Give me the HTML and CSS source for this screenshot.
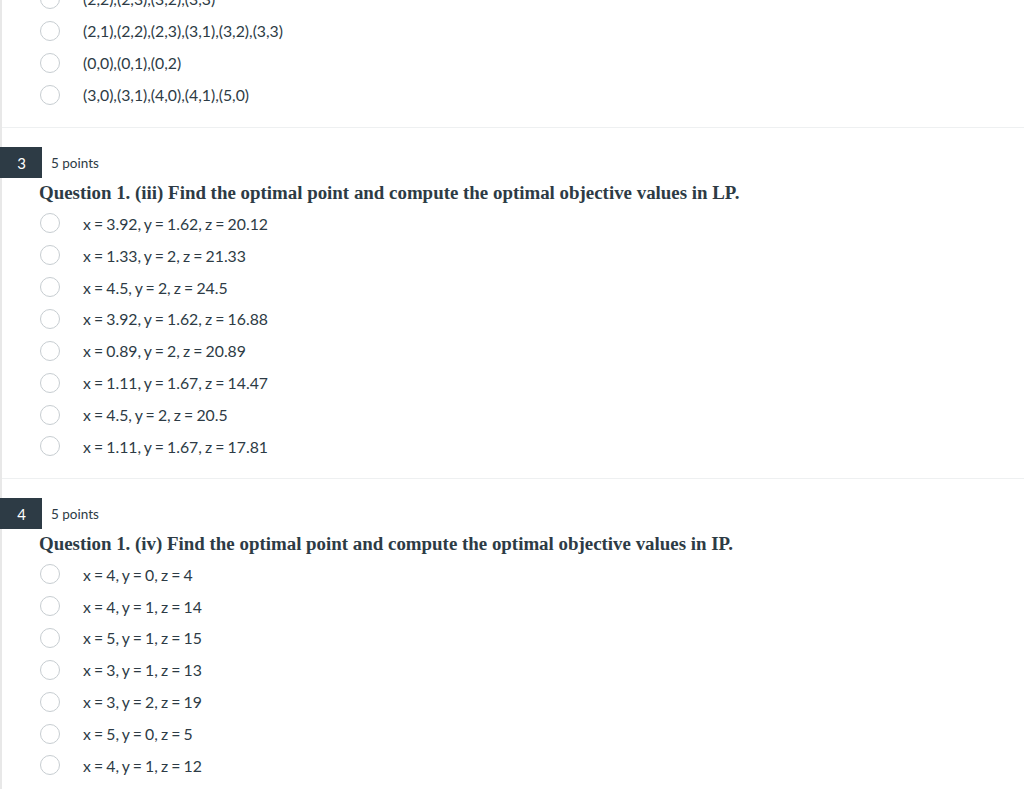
FILE: index.html
```html
<!DOCTYPE html>
<html>
<head>
<meta charset="utf-8">
<link rel="stylesheet" href="styles.css">
</head>
<body>
<div class="page">
  <section class="question first">
    <ul class="answers">
      <li><span class="radio"></span><span class="label">(2,2),(2,3),(3,2),(3,3)</span></li>
      <li><span class="radio"></span><span class="label">(2,1),(2,2),(2,3),(3,1),(3,2),(3,3)</span></li>
      <li><span class="radio"></span><span class="label">(0,0),(0,1),(0,2)</span></li>
      <li><span class="radio"></span><span class="label">(3,0),(3,1),(4,0),(4,1),(5,0)</span></li>
    </ul>
  </section>
  <section class="question">
    <div class="qhead"><span class="badge">3</span><span class="points">5 points</span></div>
    <div class="qtext">Question 1. (iii) Find the optimal point and compute the optimal objective values in LP.</div>
    <ul class="answers">
      <li><span class="radio"></span><span class="label">x = 3.92, y = 1.62, z = 20.12</span></li>
      <li><span class="radio"></span><span class="label">x = 1.33, y = 2, z = 21.33</span></li>
      <li><span class="radio"></span><span class="label">x = 4.5, y = 2, z = 24.5</span></li>
      <li><span class="radio"></span><span class="label">x = 3.92, y = 1.62, z = 16.88</span></li>
      <li><span class="radio"></span><span class="label">x = 0.89, y = 2, z = 20.89</span></li>
      <li><span class="radio"></span><span class="label">x = 1.11, y = 1.67, z = 14.47</span></li>
      <li><span class="radio"></span><span class="label">x = 4.5, y = 2, z = 20.5</span></li>
      <li><span class="radio"></span><span class="label">x = 1.11, y = 1.67, z = 17.81</span></li>
    </ul>
  </section>
  <section class="question">
    <div class="qhead"><span class="badge">4</span><span class="points">5 points</span></div>
    <div class="qtext">Question 1. (iv) Find the optimal point and compute the optimal objective values in IP.</div>
    <ul class="answers">
      <li><span class="radio"></span><span class="label">x = 4, y = 0, z = 4</span></li>
      <li><span class="radio"></span><span class="label">x = 4, y = 1, z = 14</span></li>
      <li><span class="radio"></span><span class="label">x = 5, y = 1, z = 15</span></li>
      <li><span class="radio"></span><span class="label">x = 3, y = 1, z = 13</span></li>
      <li><span class="radio"></span><span class="label">x = 3, y = 2, z = 19</span></li>
      <li><span class="radio"></span><span class="label">x = 5, y = 0, z = 5</span></li>
      <li><span class="radio"></span><span class="label">x = 4, y = 1, z = 12</span></li>
    </ul>
  </section>
</div>
</body>
</html>
```
FILE: styles.css
```css
html, body {
  margin: 0;
  padding: 0;
  background: #ffffff;
}
body {
  overflow: hidden;
  height: 789px;
}
.page {
  border-left: 2px solid #e8e8e8;
  min-height: 900px;
  font-family: Lato, "Liberation Sans", sans-serif;
  color: #2d3b45;
}
.question {
  padding: 19px 0 16px 0;
  border-bottom: 1px solid #eef0f1;
}
.question.first {
  padding-top: 0;
  padding-bottom: 17px;
  margin-top: -17px;
}
.qhead {
  display: flex;
  align-items: center;
  height: 31px;
  margin-left: -2px;
}
.badge {
  display: flex;
  align-items: center;
  justify-content: center;
  width: 42px;
  height: 31px;
  background: #2d3b45;
  color: #ffffff;
  font-size: 15px;
  box-sizing: border-box;
  padding-left: 1px;
}
.points {
  margin-left: 9px;
  font-size: 13.5px;
}
.qtext {
  height: 29px;
  display: flex;
  align-items: center;
  margin-left: 37px;
  font-family: "Liberation Serif", "Times New Roman", serif;
  font-weight: bold;
  font-size: 18.9px;
  color: #2d3b45;
}
.answers {
  list-style: none;
  margin: 0;
  padding: 0;
}
.answers li {
  display: flex;
  align-items: center;
  height: 31.86px;
}
.radio {
  width: 20px;
  height: 20px;
  box-sizing: border-box;
  border: 1px solid #c7cdd1;
  border-radius: 50%;
  margin-left: 38px;
  flex: none;
}
.label {
  margin-left: 23px;
  font-size: 15.8px;
  word-spacing: -0.9px;
}
```
